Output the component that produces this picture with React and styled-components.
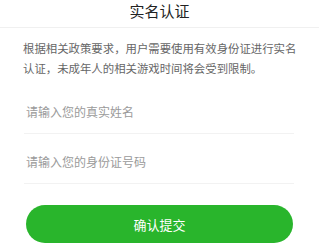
import React from 'react'
import styled, {createGlobalStyle} from 'styled-components'


const GlobalStyle = createGlobalStyle`
  html, body {
    margin: 0;
    padding: 0;
    background: #fff;
  }
  body {
    font-family: "Noto Sans CJK SC", "Noto Sans", sans-serif;
  }
`

const Page = styled.div`
  width: 319px;
  height: 246px;
  overflow: hidden;
  background: #fff;
`

const Header = styled.div`
  height: 21px;
  padding-bottom: 6px;
  border-bottom: 1px solid #f0f0f0;
  display: flex;
  align-items: center;
  justify-content: center;
  font-size: 15px;
  line-height: 1;
  color: #222;
`

const Notice = styled.p`
  margin: 0;
  padding: 10px 22px 0 23px;
  font-size: 11.4px;
  line-height: 20px;
  color: #666;
`

const Form = styled.div`
  padding: 6px 25px 0 24px;
`

const Field = styled.input`
  display: block;
  width: 100%;
  box-sizing: border-box;
  height: 50px;
  padding: 5px 0 0 2px;
  border: none;
  border-bottom: 1px solid #f2f2f2;
  outline: none;
  font-family: inherit;
  font-size: 12px;
  color: #333;
  background: transparent;

  &::placeholder {
    color: #9a9a9a;
  }
`

const SubmitButton = styled.button`
  display: flex;
  align-items: center;
  justify-content: center;
  width: 267px;
  height: 38px;
  margin: 21px 0 0 2px;
  border: none;
  border-radius: 19px;
  background: #29b52c;
  color: #fff;
  font-family: inherit;
  font-size: 13px;
  padding: 0;
`


export default function App() {
  return (
    <Page>
      <GlobalStyle />
      <Header>实名认证</Header>
      <Notice>
        根据相关政策要求，用户需要使用有效身份证进行实名认证，未成年人的相关游戏时间将会受到限制。
      </Notice>
      <Form>
        <Field placeholder="请输入您的真实姓名" />
        <Field placeholder="请输入您的身份证号码" />
        <SubmitButton>确认提交</SubmitButton>
      </Form>
    </Page>
  )
}
